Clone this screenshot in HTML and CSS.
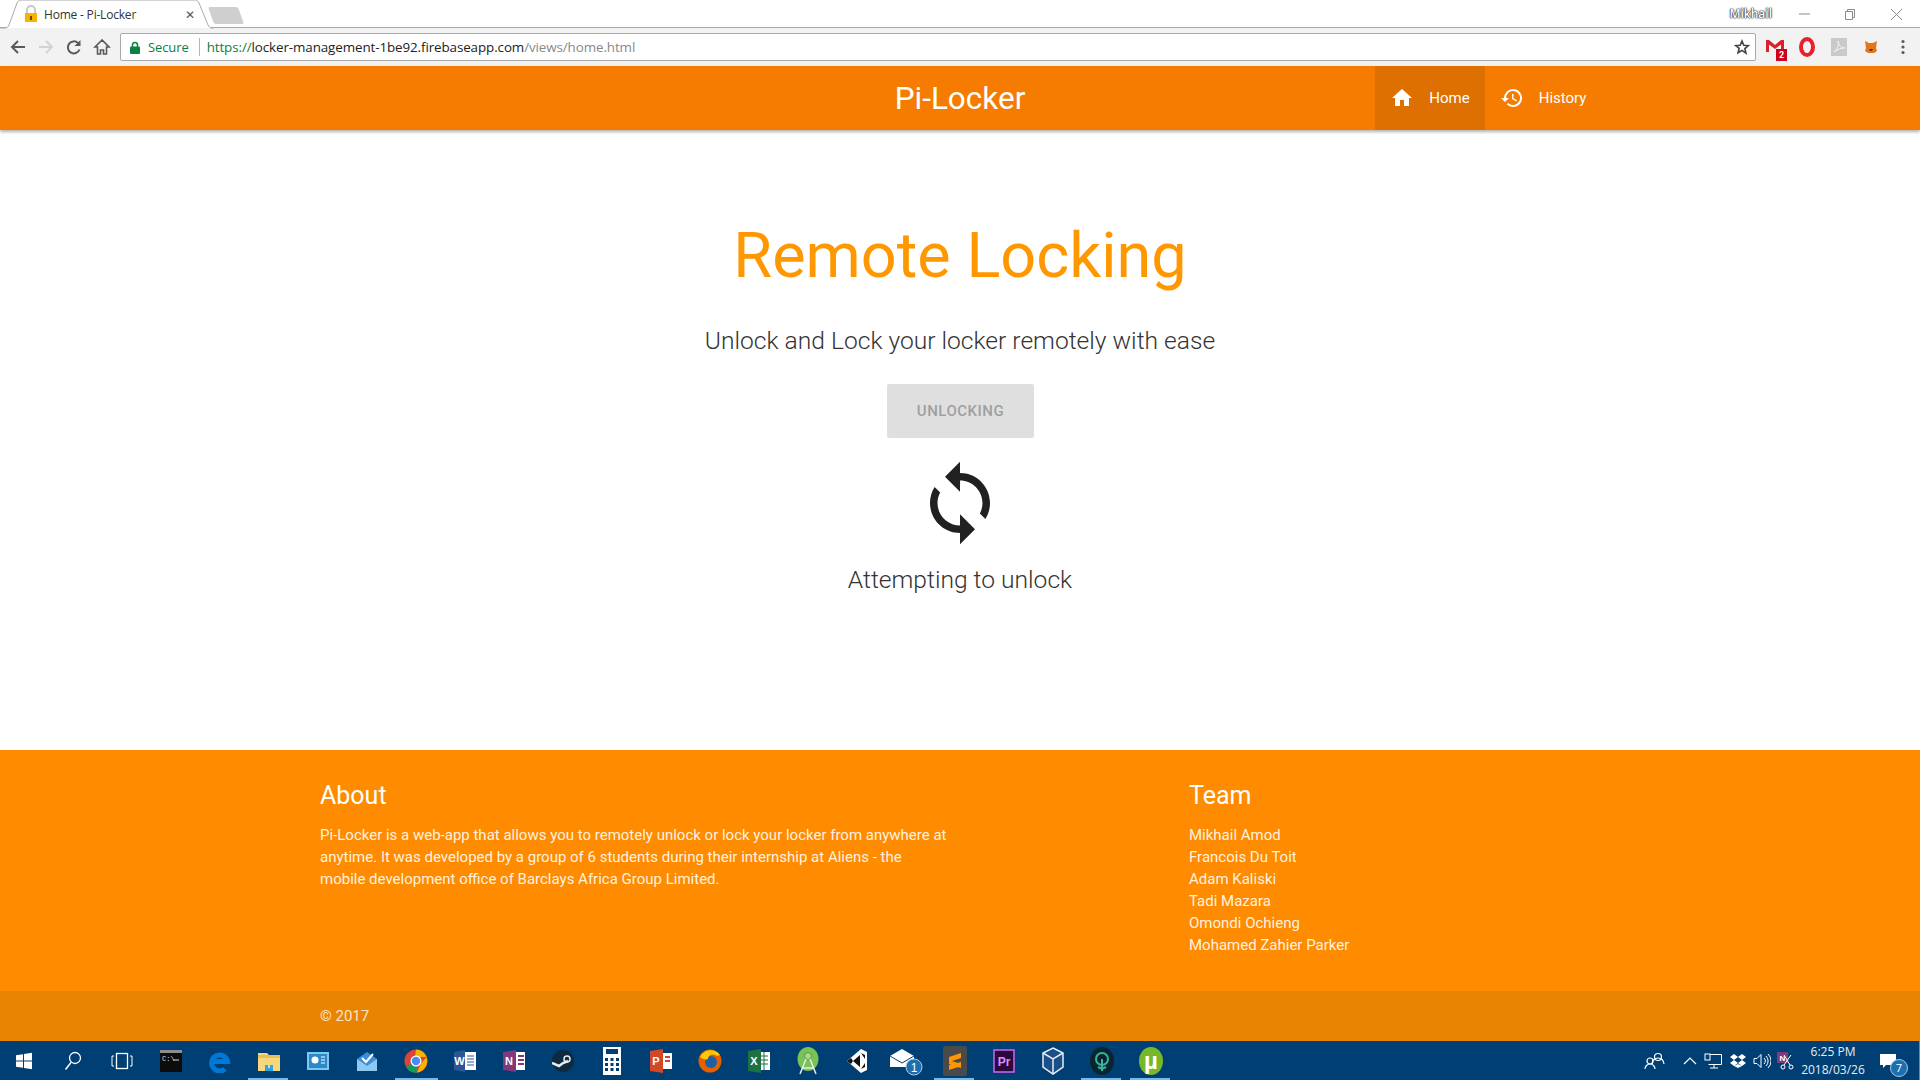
FILE: index.html
```html
<!DOCTYPE html>
<html lang="en">
<head>
  <meta charset="UTF-8" />
  <title>Home - Pi-Locker</title>
  <link rel="stylesheet" href="styles.css">
</head>
<body>
  <div class="tabstrip">
    <div class="tab">
      <svg class="tab-shape" width="214" height="29" viewBox="0 0 214 29"><path d="M0 28h5c2 0 3-1 4-3l8-22c1-2 2-3 4-3h174c2 0 3 1 4 3l9 22c1 2 2 3 4 3h2" fill="#fff" stroke="#a9a9a9"/></svg>
      <svg class="favicon" width="14" height="18" viewBox="0 0 14 18"><path d="M3 8V5a4 4 0 0 1 8 0v3" fill="none" stroke="#c9c9c9" stroke-width="2"/><rect x="1" y="8" width="12" height="9" fill="#f4b400"/><rect x="6" y="11" width="2" height="4" fill="#6b4a00"/></svg>
      <span class="tab-title">Home - Pi-Locker</span>
      <span class="tab-close">&#10005;</span>
    </div>
    <div class="newtab"></div>
    <div class="winbar">
      <span class="win-user">Mikhail</span>
      <svg class="win-btn" width="46" height="16" viewBox="0 0 46 16"><path d="M18 8h11" stroke="#8a8a8a"/></svg>
      <svg class="win-btn" width="46" height="16" viewBox="0 0 46 16"><path d="M18.500 5.500h7v8h-7zM20.500 5.500v-2h7v8h-2" fill="none" stroke="#8a8a8a"/></svg>
      <svg class="win-btn" width="46" height="16" viewBox="0 0 46 16"><path d="M18 3l11 11M29 3L18 14" stroke="#8a8a8a"/></svg>
    </div>
  </div>

  <div class="toolbar">
    <div class="tool"><svg width="18" height="18" viewBox="0 0 18 18"><path d="M16 9H3M9 3L3 9l6 6" fill="none" stroke="#5a5a5a" stroke-width="2"/></svg></div>
    <div class="tool"><svg width="18" height="18" viewBox="0 0 18 18"><path d="M2 9h13M9 3l6 6-6 6" fill="none" stroke="#d2d2d2" stroke-width="2"/></svg></div>
    <div class="tool"><svg width="18" height="18" viewBox="0 0 18 18"><path d="M14.500 11.500A6 6 0 1 1 13 5l1.500 1.500" fill="none" stroke="#5a5a5a" stroke-width="2"/><path d="M15.500 2v6h-6z" fill="#5a5a5a"/></svg></div>
    <div class="tool"><svg width="18" height="18" viewBox="0 0 18 18"><path d="M9 2L2 9h2.500v7h3v-4h3v4h3V9H16z" fill="none" stroke="#5a5a5a" stroke-width="1.600"/></svg></div>
    <div class="omnibox">
      <svg class="omni-lock" width="10" height="13" viewBox="0 0 10 13"><path d="M2.500 6V4a2.500 2.500 0 0 1 5 0v2" fill="none" stroke="#0b8043" stroke-width="1.500"/><rect y="5.500" width="10" height="7.500" rx="1" fill="#0b8043"/></svg>
      <span class="omni-secure">Secure</span>
      <span class="omni-sep"></span>
      <span class="omni-url"><span class="url-https">https://</span>locker-management-1be92.firebaseapp.com<span class="url-path">/views/home.html</span></span>
      <svg class="omni-star" width="16" height="16" viewBox="0 0 24 24"><path d="M12 3l2.700 6.300 6.800.6-5.200 4.500 1.600 6.700L12 17l-5.900 3.600 1.600-6.700L2.500 9.900l6.800-.6z" fill="none" stroke="#444" stroke-width="2.400"/></svg>
    </div>
    <div class="ext">
      <svg width="22" height="22" viewBox="0 0 22 22"><path d="M2 4h3l6 5 6-5h3v12h-3V8.500l-6 4.500-6-4.500V16H2z" fill="#d6222a"/></svg>
      <span class="ext-badge">2</span>
    </div>
    <div class="ext"><svg width="18" height="20" viewBox="0 0 18 20"><ellipse cx="9" cy="10" rx="6" ry="8" fill="none" stroke="#e8212e" stroke-width="4"/></svg></div>
    <div class="ext"><svg width="16" height="18" viewBox="0 0 16 18"><rect width="16" height="18" fill="#c9c9c9"/><path d="M3 14c3-2 5-7 4-11 1 5 3 7 7 7-4 0-7 1-11 4z" fill="none" stroke="#f4f4f4"/></svg></div>
    <div class="ext"><svg width="14" height="14" viewBox="0 0 14 14"><path d="M1 1l4 2h4l4-2-1 7 1 3-3 2H4l-3-2 1-3z" fill="#e2761b"/><path d="M5 9h4l-1 2H6z" fill="#5b3a1c"/></svg></div>
    <div class="ext"><svg width="4" height="16" viewBox="0 0 4 16"><circle cx="2" cy="2.500" r="1.600" fill="#5a5a5a"/><circle cx="2" cy="8" r="1.600" fill="#5a5a5a"/><circle cx="2" cy="13.500" r="1.600" fill="#5a5a5a"/></svg></div>
  </div>

  <nav class="navbar">
    <a class="brand">Pi-Locker</a>
    <ul class="nav-links">
      <li class="nav-link active">
        <svg width="24" height="24" viewBox="0 0 24 24"><path d="M10 20v-6h4v6h5v-8h3L12 3 2 12h3v8z" fill="#fff"/></svg>
        <span>Home</span>
      </li>
      <li class="nav-link">
        <svg width="24" height="24" viewBox="0 0 24 24"><path d="M13 3a9 9 0 0 0-9 9H1l3.890 3.890.07.140L9 12H6a7 7 0 1 1 2.050 4.950l-1.420 1.420A9 9 0 1 0 13 3zm-1 5v5l4.280 2.540.72-1.210-3.500-2.080V8z" fill="#fff"/></svg>
        <span>History</span>
      </li>
    </ul>
  </nav>

  <main class="content">
    <h1 class="title">Remote Locking</h1>
    <p class="subtitle">Unlock and Lock your locker remotely with ease</p>
    <button class="lock-btn" disabled>UNLOCKING</button>
    <svg class="sync" width="90" height="90" viewBox="0 0 24 24"><path d="M12 4V1L8 5l4 4V6c3.310 0 6 2.690 6 6 0 1.010-.25 1.970-.7 2.800l1.460 1.460C19.540 15.030 20 13.570 20 12c0-4.420-3.580-8-8-8zm0 14c-3.310 0-6-2.690-6-6 0-1.010.25-1.970.7-2.800L5.240 7.740C4.460 8.970 4 10.430 4 12c0 4.420 3.580 8 8 8v3l4-4-4-4v3z" fill="#212121"/></svg>
    <p class="status">Attempting to unlock</p>
  </main>

  <footer class="footer">
    <div class="footer-cols">
      <section class="about">
        <h5>About</h5>
        <p>Pi-Locker is a web-app that allows you to remotely unlock or lock your locker from anywhere at anytime. It was developed by a group of 6 students during their internship at Aliens - the mobile development office of Barclays Africa Group Limited.</p>
      </section>
      <section class="team">
        <h5>Team</h5>
        <ul>
          <li>Mikhail Amod</li>
          <li>Francois Du Toit</li>
          <li>Adam Kaliski</li>
          <li>Tadi Mazara</li>
          <li>Omondi Ochieng</li>
          <li>Mohamed Zahier Parker</li>
        </ul>
      </section>
    </div>
    <div class="copyright">© 2017</div>
  </footer>

  <div class="taskbar">
    <div class="task"><svg width="18" height="18" viewBox="0 0 18 18"><path d="M1 3.200l7-1v6.300H1zM9 2l8-1.200v7.700H9zM1 9.500h7v6.300l-7-1zM9 9.500h8v7.700l-8-1.200z" fill="#fff"/></svg></div>
    <div class="task"><svg width="18" height="20" viewBox="0 0 18 20"><circle cx="11" cy="7" r="5.500" fill="none" stroke="#fff" stroke-width="1.300"/><path d="M7 11.500L1.500 18.500" stroke="#fff" stroke-width="1.500"/></svg></div>
    <div class="task"><svg width="22" height="18" viewBox="0 0 22 18"><rect x="5.500" y="1.500" width="11" height="15" fill="none" stroke="#fff" stroke-width="1.300"/><path d="M3 4H1v10h2M19 4h2v10h-2" fill="none" stroke="#fff"/></svg></div>
    <div class="task"><svg width="22" height="22" viewBox="0 0 22 22"><rect width="22" height="22" fill="#0c0c0c"/><rect width="22" height="3" fill="#8d8d8d"/><text x="2" y="11" class="ti-cmd">C:\</text><path d="M13 10h6" stroke="#ddd"/></svg></div>
    <div class="task"><svg width="22" height="24" viewBox="0 0 22 24"><path d="M3.500 12.500h15a8 8 0 1 0-2.500 7.500" fill="none" stroke="#0078d7" stroke-width="5"/></svg></div>
    <div class="task active"><svg width="22" height="20" viewBox="0 0 22 20"><path d="M0 2h9l2 2h11v16H0z" fill="#f6d77e"/><rect y="4" width="22" height="3" fill="#e9be52"/><path d="M7 14h8v6H7z" fill="#2aa5e6"/><path d="M10 14h2v3h-2z" fill="#f6d77e"/></svg></div>
    <div class="task"><svg width="22" height="18" viewBox="0 0 22 18"><rect width="22" height="18" fill="#7cc8ef"/><rect x="2" y="2" width="18" height="14" fill="#2b88c9"/><circle cx="8" cy="8" r="3.500" fill="#fff"/><path d="M14 5h4M14 8h4M14 11h4" stroke="#fff"/></svg></div>
    <div class="task"><svg width="20" height="20" viewBox="0 0 20 20"><path d="M0 8l10-7 10 7v12H0z" fill="#3b8fd9"/><path d="M0 8l10 7 10-7v12H0z" fill="#8ec9f3"/><path d="M5 7l4 4 7-8" fill="none" stroke="#fff" stroke-width="2"/></svg></div>
    <div class="task active split"><svg width="24" height="24" viewBox="0 0 24 24"><circle cx="12" cy="12" r="11.500" fill="#db4437"/><path d="M12 12L2 18a11.500 11.500 0 0 0 11 5.500z" fill="#0f9d58"/><path d="M12 .5A11.500 11.500 0 0 1 22.500 8H12l-1.500 4z" fill="#f4b400"/><path d="M22.500 8A11.500 11.500 0 0 1 13 23.500l4-9z" fill="#f4b400"/><circle cx="12" cy="12" r="5.500" fill="#fff"/><circle cx="12" cy="12" r="4.200" fill="#4a8af4"/></svg></div>
    <div class="task"><svg width="24" height="24" viewBox="0 0 24 24"><rect x="9" y="3" width="14" height="18" fill="#fff"/><path d="M14 7h7M14 10h7M14 13h7M14 16h7" stroke="#2b5797"/><path d="M1 3l11-2v22L1 21z" fill="#2b5797"/><text x="6.500" y="16" class="ti ti-small">W</text></svg></div>
    <div class="task"><svg width="24" height="24" viewBox="0 0 24 24"><rect x="9" y="3" width="14" height="18" fill="#fff"/><path d="M16 7h6M16 11h6M16 15h6" stroke="#80397b" stroke-width="2"/><path d="M1 3l13-2v22L1 21z" fill="#80397b"/><text x="7" y="16" class="ti ti-small">N</text></svg></div>
    <div class="task"><svg width="22" height="22" viewBox="0 0 22 22"><circle cx="11" cy="11" r="11" fill="#0f2a40"/><path d="M0 13l7 3 4-3 5-2" fill="none" stroke="#e5edf2" stroke-width="2.500"/><circle cx="15" cy="9" r="3" fill="none" stroke="#e5edf2" stroke-width="1.500"/></svg></div>
    <div class="task"><svg width="18" height="28" viewBox="0 0 18 28"><rect width="18" height="28" fill="#fff"/><rect x="3" y="2" width="12" height="5" fill="#003f73"/><path d="M2 11h3v3H2zM7.500 11h3v3h-3zM13 11h3v3h-3zM2 16h3v3H2zM7.500 16h3v3h-3zM13 16h3v3h-3zM2 21h3v3H2zM7.500 21h3v3h-3zM13 21h3v3h-3z" fill="#003f73"/></svg></div>
    <div class="task"><svg width="24" height="26" viewBox="0 0 24 26"><rect x="9" y="5" width="14" height="16" fill="#fff"/><path d="M16 9h5M16 13h5" stroke="#d24726" stroke-width="2"/><path d="M1 3l13-2v24L1 23z" fill="#d24726"/><text x="7" y="17" class="ti ti-small">P</text></svg></div>
    <div class="task"><svg width="24" height="26" viewBox="0 0 24 26"><circle cx="12" cy="13" r="11.500" fill="#e66000"/><circle cx="13" cy="14" r="6" fill="#1f5fa8"/><path d="M2 9c4-8 15-9 20-2l-3 1c-5-3-9-1-9 3-3 1-5 0-8-2z" fill="#ffcb00"/></svg></div>
    <div class="task"><svg width="24" height="26" viewBox="0 0 24 26"><rect x="9" y="4" width="14" height="18" fill="#fff"/><path d="M13 8h8M13 12h8M13 16h8M17 4v18" stroke="#1e7145"/><path d="M1 3l13-2v24L1 23z" fill="#1e7145"/><text x="7" y="17" class="ti ti-small">X</text></svg></div>
    <div class="task"><svg width="22" height="28" viewBox="0 0 22 28"><ellipse cx="11" cy="12" rx="10.500" ry="12" fill="#78c257"/><circle cx="11" cy="9" r="3.500" fill="#a5d98c" stroke="#5a9a3c" stroke-width="1"/><path d="M9 12L3 27M13 12l6 15M6 21h10" stroke="#e8f0e8" stroke-width="1.500" fill="none"/></svg></div>
    <div class="task"><svg width="22" height="26" viewBox="0 0 22 26"><path d="M1 13L15 1l6 3v18l-6 3z" fill="#fff"/><path d="M7 13l7-6v12zM15 5l4 2v4zM15 21l4-2v-4z" fill="#111"/><path d="M1 13l4-3 2 3-2 3z" fill="#111"/></svg></div>
    <div class="task"><svg width="34" height="30" viewBox="0 0 34 30"><path d="M1 10l12-7 12 7v11H1z" fill="#fff"/><path d="M1 10l12 7 12-7" fill="none" stroke="#003f73"/><circle cx="25" cy="21" r="8" fill="#1d6fb0" stroke="#a9c9e4"/><text x="25" y="25.500" class="ti ti-badge">1</text></svg></div>
    <div class="task active"><svg width="24" height="30" viewBox="0 0 24 30"><rect width="24" height="30" rx="2" fill="#4a4a4a"/><path d="M6 11l12-4v5L6 16zM6 14l12 4v4L6 18zM6 19l12-3v4L6 24z" fill="#ff9800"/></svg></div>
    <div class="task"><svg width="22" height="24" viewBox="0 0 22 24"><rect x="1" y="1" width="20" height="22" fill="#2a0a3c" stroke="#d066f0" stroke-width="1.500"/><text x="11" y="17" class="ti ti-pr">Pr</text></svg></div>
    <div class="task"><svg width="22" height="28" viewBox="0 0 22 28"><path d="M11 1l10 5v14l-10 7-10-7V6z" fill="#1b4f8a" stroke="#e6edf5" stroke-width="1.500"/><path d="M1 6l10 6 10-6M11 12v15" fill="none" stroke="#e6edf5" stroke-width="1.500"/></svg></div>
    <div class="task active"><svg width="24" height="28" viewBox="0 0 24 28"><ellipse cx="12" cy="14" rx="12" ry="14" fill="#0b2530"/><circle cx="12" cy="12" r="6" fill="none" stroke="#35b59e" stroke-width="2"/><path d="M12 12v12M8 20l4 2 4-2" fill="none" stroke="#35b59e" stroke-width="2"/></svg></div>
    <div class="task active"><svg width="24" height="28" viewBox="0 0 24 28"><ellipse cx="12" cy="14" rx="12" ry="14" fill="#76b82a"/><text x="12" y="22" class="ti ti-mu">µ</text></svg></div>

    <div class="tray">
      <svg class="tray-people" width="24" height="20" viewBox="0 0 24 20"><circle cx="15" cy="6" r="3.500" fill="none" stroke="#fff" stroke-width="1.200"/><path d="M9 13a6 6 0 0 1 12 0" fill="none" stroke="#fff" stroke-width="1.200"/><circle cx="7" cy="10" r="3" fill="none" stroke="#fff" stroke-width="1.200"/><path d="M2 18a5 5 0 0 1 10 0" fill="none" stroke="#fff" stroke-width="1.200"/></svg>
      <svg class="tray-chev" width="14" height="8" viewBox="0 0 14 8"><path d="M1 7l6-6 6 6" fill="none" stroke="#fff" stroke-width="1.200"/></svg>
      <svg class="tray-net" width="18" height="16" viewBox="0 0 18 16"><path d="M4.500 1.500h13v10h-13M10 12v3M6 15h8" fill="none" stroke="#fff"/><rect x="1" y="1" width="5" height="6" fill="#003f73" stroke="#fff"/></svg>
      <svg class="tray-drop" width="16" height="14" viewBox="0 0 16 14"><path d="M4 0l4 3-4 3-4-3zM12 0l4 3-4 3-4-3zM4 6l4 3-4 3-4-3zM12 6l4 3-4 3-4-3zM4 12l4-2 4 2-4 2z" fill="#fff"/></svg>
      <svg class="tray-vol" width="18" height="16" viewBox="0 0 18 16"><path d="M1 5.500h3l4-4v13l-4-4H1z" fill="none" stroke="#fff"/><path d="M11 5a4 4 0 0 1 0 6M13 3a7 7 0 0 1 0 10M15 1a9.500 9.500 0 0 1 0 14" fill="none" stroke="#fff"/></svg>
      <svg class="tray-clip" width="18" height="18" viewBox="0 0 18 18"><rect width="11" height="11" fill="#80397b"/><text x="5.500" y="9" class="ti ti-tiny">N</text><circle cx="6" cy="15" r="2" fill="none" stroke="#fff"/><circle cx="14" cy="15" r="2" fill="none" stroke="#fff"/><path d="M7 13l7-10M13 13L7 3" stroke="#fff"/></svg>
      <div class="clock"><span>6:25 PM</span><span>2018/03/26</span></div>
      <div class="action">
        <svg width="18" height="16" viewBox="0 0 18 16"><path d="M1 1h16v11H7l-3 3v-3H1z" fill="#fff"/></svg>
        <span class="action-badge">7</span>
      </div>
    </div>
  </div>
</body>
</html>
```

FILE: styles.css
```css
* {
  box-sizing: border-box;
}

html, body {
  margin: 0;
  height: 1080px;
  overflow: hidden;
}

body {
  font-family: Roboto, sans-serif;
  background-color: #fff;
  display: flex;
  flex-direction: column;
}

/* browser frame */
.tabstrip {
  height: 28px;
  flex: none;
  display: flex;
  align-items: flex-start;
  background-color: #fff;
  border-bottom: 1px solid #a9a9a9;
}

.tab {
  position: relative;
  width: 209px;
  height: 28px;
  display: flex;
  align-items: center;
  padding-left: 24px;
  font-family: "Open Sans", sans-serif;
  font-size: 12px;
  color: #333;
}

.tab-shape {
  position: absolute;
  left: 0;
  top: 0;
}

.favicon, .tab-title, .tab-close {
  position: relative;
}

.tab-title {
  margin-left: 6px;
  width: 141px;
  letter-spacing: -0.2px;
}

.tab-close {
  font-size: 12px;
  color: #555;
}

.newtab {
  width: 30px;
  height: 17px;
  margin: 7px 0 0 2px;
  background-color: #cfcfcf;
  border-radius: 2px;
  transform: skewX(20deg);
}

.winbar {
  margin-left: auto;
  display: flex;
  align-items: center;
  height: 27px;
  padding-right: 1px;
}

.win-user {
  font-family: "Open Sans", sans-serif;
  font-size: 12px;
  font-weight: 600;
  color: #fff;
  text-shadow: 0 0 1px #222, 0 0 1px #222, 0 0 2px #222;
  margin-right: 9px;
}

.toolbar {
  height: 38px;
  flex: none;
  display: flex;
  align-items: center;
  padding-left: 4px;
  background-color: #f2f2f2;
}

.tool {
  width: 28px;
  display: flex;
  justify-content: center;
}

.omnibox {
  width: 1636px;
  height: 28px;
  margin: 0 3px 0 4px;
  display: flex;
  align-items: center;
  padding: 0 5px 0 9px;
  background-color: #fff;
  border: 1px solid #a9a9a9;
  border-radius: 2px;
  font-family: "Open Sans", sans-serif;
  font-size: 13.400px;
  letter-spacing: -0.1px;
}

.omni-secure {
  margin-left: 8px;
  color: #0b8043;
  font-size: 13px;
}

.omni-sep {
  width: 1px;
  height: 18px;
  margin: 0 7px 0 10px;
  background-color: #b5b5b5;
}

.url-https {
  color: #0b8043;
}

.omni-url {
  color: #222;
}

.url-path {
  color: #888;
}

.omni-star {
  margin-left: auto;
}

.ext {
  position: relative;
  width: 32px;
  display: flex;
  justify-content: center;
}

.ext-badge {
  position: absolute;
  right: 4px;
  bottom: -3px;
  width: 11px;
  height: 12px;
  background-color: #d0021b;
  color: #fff;
  font-size: 9px;
  font-weight: 700;
  line-height: 12px;
  text-align: center;
}

/* navbar */
.navbar {
  height: 64px;
  flex: none;
  display: grid;
  grid-template-columns: 1fr auto 1fr;
  grid-template-rows: 64px;
  background-color: #f57c00;
  box-shadow: 0 2px 3px rgba(0, 0, 0, 0.3);
  position: relative;
  color: #fff;
}

.brand {
  grid-column: 2;
  font-size: 31.500px;
  line-height: 66px;
}

.nav-links {
  grid-column: 3;
  list-style: none;
  margin: 0 0 0 350px;
  padding: 0;
  display: flex;
}

.nav-link {
  display: flex;
  align-items: center;
  gap: 15px;
  padding: 0 15px;
  font-size: 15px;
}

.nav-link.active {
  background-color: #dd7000;
}

/* main */
.content {
  flex: 1;
  display: flex;
  flex-direction: column;
  align-items: center;
  padding-top: 91px;
}

.title {
  margin: 0;
  font-size: 63px;
  font-weight: 400;
  line-height: 70px;
  color: #ff9800;
}

.subtitle {
  margin: 35px 0 0;
  font-size: 24.600px;
  font-weight: 300;
  line-height: 30px;
  color: #333;
}

.lock-btn {
  width: 147px;
  height: 54px;
  margin: 28px 0 0 1px;
  border: 0;
  border-radius: 2px;
  background-color: #dfdfdf;
  color: #9f9f9f;
  font-family: Roboto, sans-serif;
  font-size: 15px;
  font-weight: 500;
  letter-spacing: 0.5px;
}

.sync {
  margin-top: 20px;
}

.status {
  margin: 17px 0 0;
  font-size: 24.600px;
  font-weight: 300;
  line-height: 30px;
  color: #333;
}

/* footer */
.footer {
  flex: none;
  background-color: #ff8c00;
  color: #fff;
}

.footer-cols {
  height: 241px;
  display: grid;
  grid-template-columns: 869px 1fr;
  padding: 29px 0 0 320px;
}

.footer h5 {
  margin: 0;
  font-size: 25px;
  font-weight: 400;
  line-height: 34px;
}

.about p {
  width: 630px;
  margin: 11px 0 0;
  font-size: 15px;
  line-height: 22px;
  color: rgba(255, 255, 255, 0.9);
}

.team ul {
  list-style: none;
  margin: 11px 0 0;
  padding: 0;
  font-size: 15px;
  line-height: 22px;
  color: rgba(255, 255, 255, 0.9);
}

.copyright {
  height: 50px;
  padding-left: 320px;
  background-color: #e98400;
  font-size: 15px;
  line-height: 50px;
  color: rgba(255, 255, 255, 0.8);
}

/* windows taskbar */
.taskbar {
  height: 39px;
  flex: none;
  display: flex;
  align-items: stretch;
  background-color: #003f73;
}

.task {
  position: relative;
  width: 49px;
  display: flex;
  align-items: center;
  justify-content: center;
}

.task:first-child {
  margin-left: -1px;
}

.task svg {
  max-height: 30px;
}

.task.active::after {
  content: "";
  position: absolute;
  left: 4px;
  right: 5px;
  bottom: 0;
  height: 2px;
  background-color: #76b9ed;
}

.task.split::before {
  content: "";
  position: absolute;
  left: 44px;
  width: 3px;
  bottom: 0;
  height: 2px;
  background-color: #76b9ed;
}

.ti {
  font-family: "Liberation Sans", sans-serif;
  font-weight: 700;
  fill: #fff;
  text-anchor: middle;
}

.ti-cmd {
  font-family: "Liberation Mono", monospace;
  font-size: 7px;
  fill: #ddd;
}

.ti-small {
  font-size: 11px;
}

.ti-badge {
  font-size: 12px;
  font-weight: 400;
}

.ti-pr {
  font-size: 12px;
  fill: #e08cff;
}

.ti-mu {
  font-size: 24px;
}

.ti-tiny {
  font-size: 8px;
}

.tray {
  margin-left: auto;
  display: flex;
  align-items: center;
  color: #fff;
}

.tray-chev {
  margin-left: 16px;
}

.tray-net {
  margin-left: 7px;
}

.tray-drop {
  margin-left: 8px;
}

.tray-vol {
  margin-left: 7px;
}

.tray-clip {
  margin-left: 6px;
}

.clock {
  width: 68px;
  margin-left: 4px;
  display: flex;
  flex-direction: column;
  align-items: center;
  font-family: "Open Sans", sans-serif;
  font-size: 12px;
  line-height: 18px;
  color: #e6edf3;
}

.action {
  position: relative;
  width: 47px;
  height: 39px;
  display: flex;
  align-items: center;
  justify-content: center;
  margin-left: 6px;
  padding-right: 17px;
  border-right: 1px solid #5f8bb0;
}

.action-badge {
  position: absolute;
  left: 17px;
  top: 18px;
  width: 18px;
  height: 18px;
  border-radius: 50%;
  background-color: #1d6fb0;
  border: 1px solid #a9c9e4;
  font-family: "Open Sans", sans-serif;
  font-size: 11px;
  line-height: 16px;
  text-align: center;
  color: #fff;
}
```
